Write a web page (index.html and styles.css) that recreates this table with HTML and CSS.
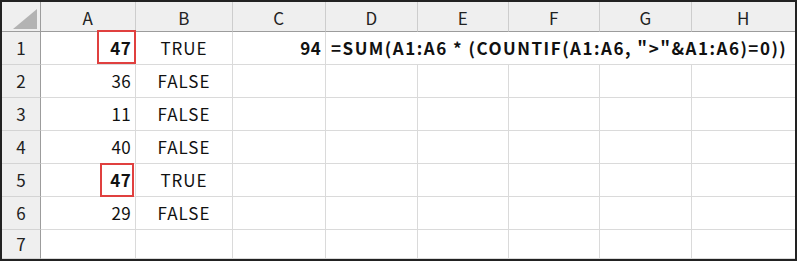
FILE: index.html
```html
<!DOCTYPE html>
<html lang="ja">
<head>
    <meta charset="UTF-8">
    <meta name="viewport" content="width=device-width, initial-scale=1.0">
    <title>Sheet1</title>
    <link rel="stylesheet" href="styles.css">
</head>
<body>
    <div class="sheet">
        <div class="corner"><span class="tri"></span></div>
        <div class="colhead">A</div>
        <div class="colhead">B</div>
        <div class="colhead">C</div>
        <div class="colhead">D</div>
        <div class="colhead">E</div>
        <div class="colhead">F</div>
        <div class="colhead">G</div>
        <div class="colhead last">H</div>

        <div class="rowhead">1</div>
        <div class="cell num bold"><span class="mark"></span>47</div>
        <div class="cell center">TRUE</div>
        <div class="cell num bold">94</div>
        <div class="cell formula bold">=SUM(A1:A6 * (COUNTIF(A1:A6, "&gt;"&amp;A1:A6)=0))</div>

        <div class="rowhead">2</div>
        <div class="cell num">36</div>
        <div class="cell center">FALSE</div>
        <div class="cell"></div><div class="cell"></div><div class="cell"></div><div class="cell"></div><div class="cell"></div><div class="cell last"></div>

        <div class="rowhead">3</div>
        <div class="cell num">11</div>
        <div class="cell center">FALSE</div>
        <div class="cell"></div><div class="cell"></div><div class="cell"></div><div class="cell"></div><div class="cell"></div><div class="cell last"></div>

        <div class="rowhead">4</div>
        <div class="cell num">40</div>
        <div class="cell center">FALSE</div>
        <div class="cell"></div><div class="cell"></div><div class="cell"></div><div class="cell"></div><div class="cell"></div><div class="cell last"></div>

        <div class="rowhead">5</div>
        <div class="cell num bold"><span class="mark small"></span>47</div>
        <div class="cell center">TRUE</div>
        <div class="cell"></div><div class="cell"></div><div class="cell"></div><div class="cell"></div><div class="cell"></div><div class="cell last"></div>

        <div class="rowhead">6</div>
        <div class="cell num">29</div>
        <div class="cell center">FALSE</div>
        <div class="cell"></div><div class="cell"></div><div class="cell"></div><div class="cell"></div><div class="cell"></div><div class="cell last"></div>

        <div class="rowhead">7</div>
        <div class="cell"></div><div class="cell"></div><div class="cell"></div><div class="cell"></div><div class="cell"></div><div class="cell"></div><div class="cell"></div><div class="cell last"></div>
    </div>
</body>
</html>
```

FILE: styles.css
```css
*{
    margin: 0px;
    padding: 0px;
    box-sizing: border-box;
}
body {
    width: 797px;
    height: 261px;
    background-color: #222;
    font-family: "Noto Sans CJK JP", "Liberation Sans", sans-serif;
    color: #111;
    overflow: hidden;
}
.sheet {
    margin: 2px;
    width: 793px;
    height: 257px;
    background-color: #fff;
    display: grid;
    grid-template-columns: 39px 95px 97px 93px 92px 91px 91px 92px 103px;
    grid-template-rows: 30px repeat(6, 33px) 29px;
    overflow: hidden;
}
.corner {
    background-color: #efefef;
    border-right: 1px solid #9c9c9c;
    border-bottom: 1px solid #9c9c9c;
    position: relative;
}
.tri {
    position: absolute;
    left: 11px;
    top: 7px;
    width: 24px;
    height: 20px;
    background-color: #b3b3b3;
    clip-path: polygon(100% 0, 100% 100%, 0 100%);
}
.colhead {
    background-color: #efefef;
    border-right: 1px solid #cdcdcd;
    border-bottom: 1px solid #9c9c9c;
    display: flex;
    align-items: center;
    justify-content: center;
    font-size: 17px;
    color: #222;
    padding-top: 1px;
    letter-spacing: 0.5px;
}
.rowhead {
    background-color: #efefef;
    border-right: 1px solid #9c9c9c;
    border-bottom: 1px solid #d4d4d4;
    display: flex;
    align-items: center;
    justify-content: center;
    font-size: 17px;
    color: #222;
    padding-bottom: 2px;
}
.cell {
    border-right: 1px solid #dadada;
    border-bottom: 1px solid #dadada;
    display: flex;
    align-items: center;
    font-size: 17px;
    position: relative;
    white-space: nowrap;
    padding-bottom: 2px;
}
.last, .colhead.last {
    border-right: none;
}
.num {
    justify-content: flex-end;
    padding-right: 4px;
    letter-spacing: 0.3px;
}
.center {
    justify-content: center;
    letter-spacing: 1px;
}
.bold {
    font-weight: bold;
}
.formula {
    grid-column: span 5;
    border-right: none;
    padding-left: 5px;
    letter-spacing: 1.5px;
}
/* red highlight around the max values */
.mark {
    position: absolute;
    left: 56px;
    top: -2px;
    width: 39px;
    height: 34px;
    border: 2px solid #e0403f;
}
.mark.small {
    left: 59px;
    top: -1px;
    width: 34px;
    height: 34px;
}
```
